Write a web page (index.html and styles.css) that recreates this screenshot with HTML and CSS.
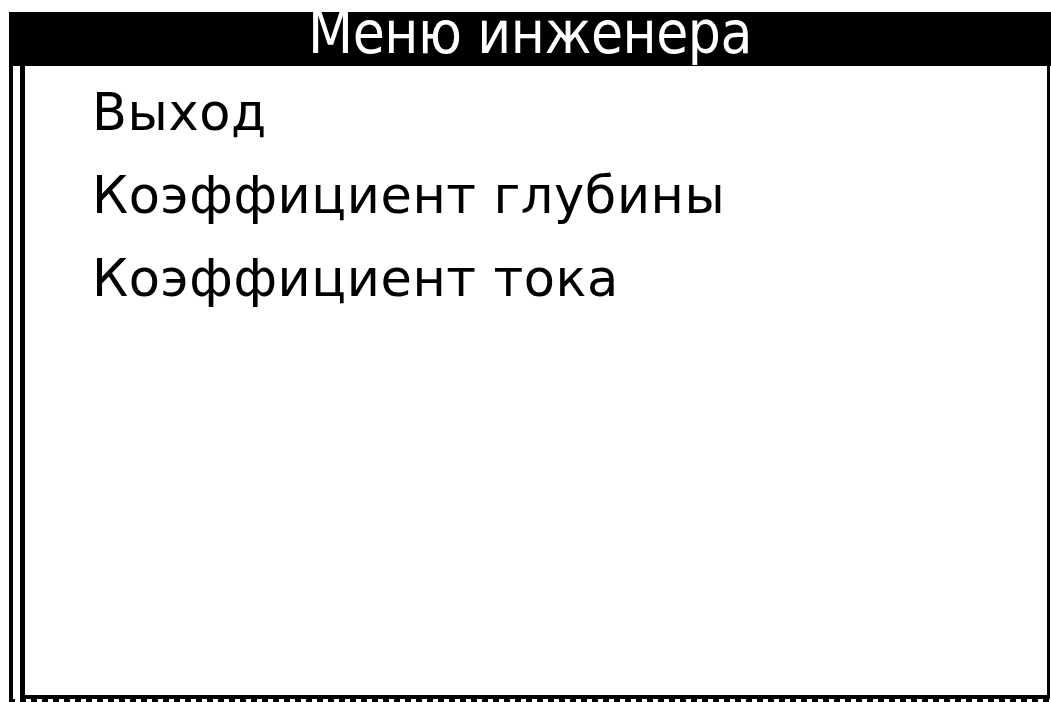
FILE: index.html
```html
<!DOCTYPE html>
<html lang="ru">
<head>
<meta charset="utf-8">
<title>Меню инженера</title>
<link rel="stylesheet" href="styles.css">
</head>
<body>
<div class="screen">
  <div class="title-bar">Меню инженера</div>
  <div class="frame">
    <div class="frame-inner">
      <ul class="menu">
        <li class="menu-item">Выход</li>
        <li class="menu-item">Коэффициент глубины</li>
        <li class="menu-item">Коэффициент тока</li>
      </ul>
    </div>
  </div>
  <div class="frame-dots"></div>
</div>
</body>
</html>
```

FILE: styles.css
```css
html, body {
  margin: 0;
  padding: 0;
  background: #fff;
}

body {
  width: 1051px;
  height: 702px;
  overflow: hidden;
  font-family: "DejaVu Sans", "Liberation Sans", sans-serif;
  color: #000;
}

.screen {
  margin: 12px 0 0 9px;
  width: 1042px;
}

/* inverted header strip */
.title-bar {
  height: 54px;
  line-height: 43px;
  background: #000;
  color: #fff;
  font-family: "DejaVu Sans Condensed", "DejaVu Sans", sans-serif;
  font-stretch: condensed;
  font-size: 58px;
  letter-spacing: -0.5px;
  text-align: center;
  white-space: nowrap;
}

/* double rule on the left, single on the right and bottom */
.frame {
  border-left: 4px solid #000;
  width: 1037px;
}

.frame-inner {
  margin-left: 7px;
  height: 629px;
  border-left: 5px solid #000;
  border-right: 3px solid #000;
  border-bottom: 4px solid #000;
}

.frame-dots {
  height: 3px;
  width: 1041px;
  background: repeating-linear-gradient(90deg, #000 0 6px, #fff 6px 11px);
}

.menu {
  list-style: none;
  margin: 0;
  padding: 5px 0 0 67px;
}

.menu-item {
  font-size: 51px;
  line-height: 83px;
  letter-spacing: 0.6px;
  white-space: nowrap;
}
```
